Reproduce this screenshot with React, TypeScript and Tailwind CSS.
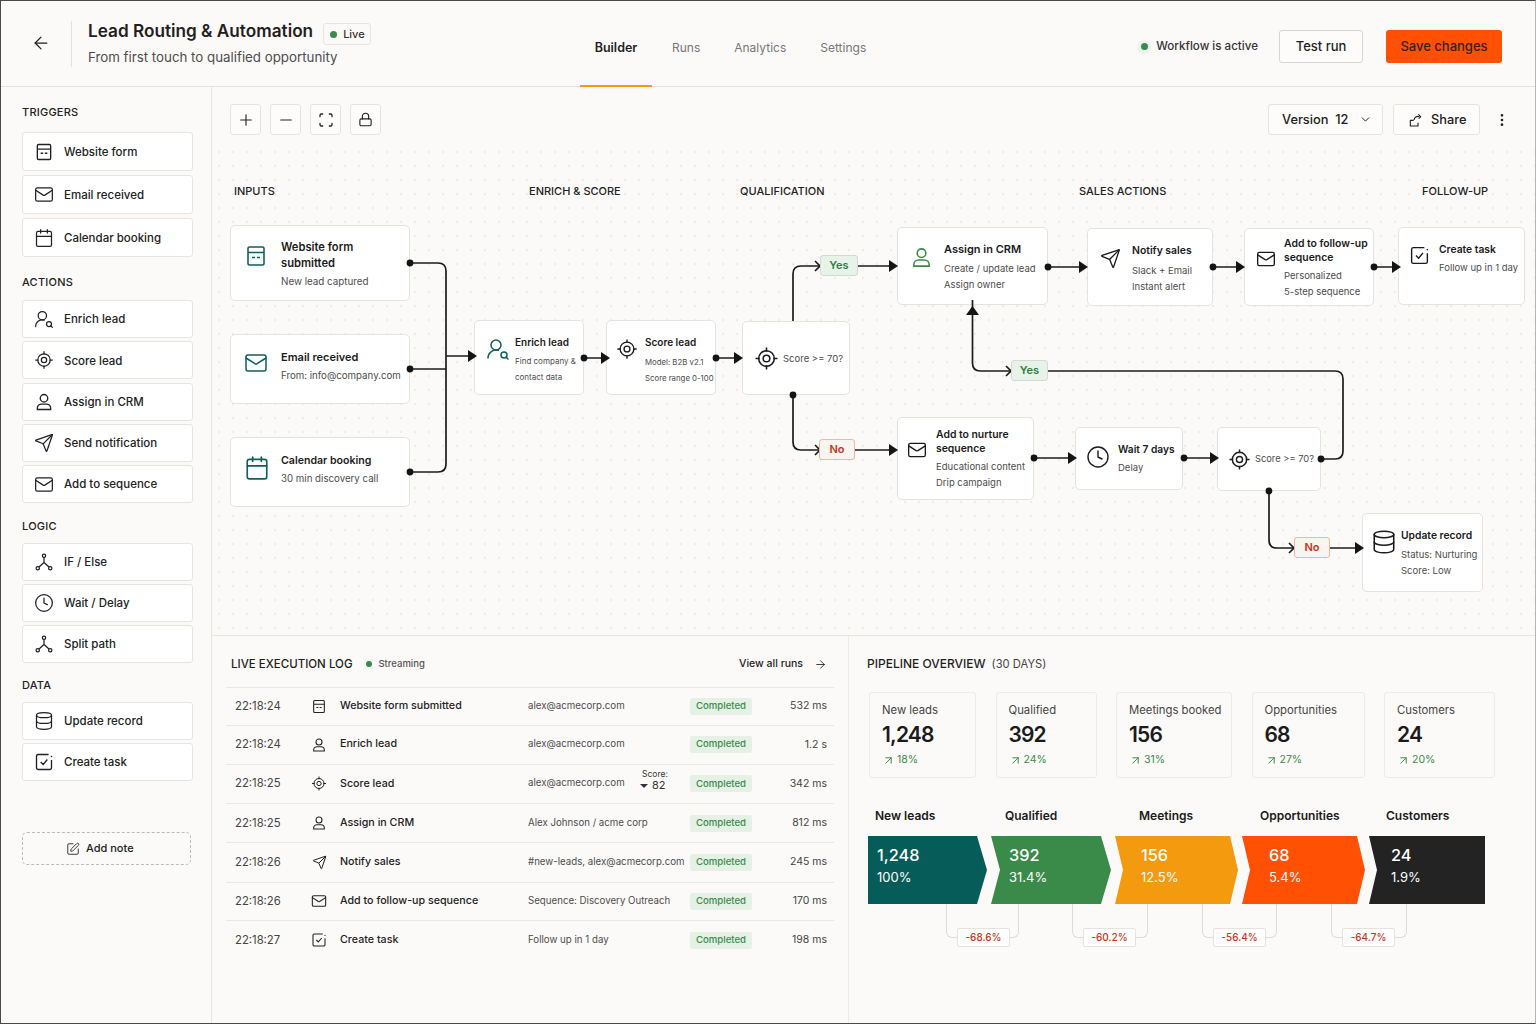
import type { ReactNode } from "react";
import {
  ArrowLeft,
  ArrowRight,
  ArrowUpRight,
  Calendar,
  ChevronDown,
  Clock,
  Database,
  EllipsisVertical,
  Lock,
  Mail,
  Minus,
  Plus,
  Scan,
  Send,
  SquarePen,
  UserRoundSearch,
} from "lucide-react";

type IconProps = { className?: string };

function FormIcon({ className }: IconProps) {
  return (
    <svg viewBox="0 0 24 24" fill="none" stroke="currentColor" strokeWidth="1.6" className={className}>
      <rect x="4" y="3" width="16" height="18" rx="1.5" />
      <path d="M4 8.5h16M8 13.5h3M13 13.5h3" />
    </svg>
  );
}

function TargetIcon({ className }: IconProps) {
  return (
    <svg viewBox="0 0 24 24" fill="none" stroke="currentColor" strokeWidth="1.5" className={className}>
      <circle cx="12" cy="12" r="7.5" />
      <circle cx="12" cy="12" r="3.2" />
      <path d="M12 1.5v4M12 18.5v4M1.5 12h4M18.5 12h4" />
    </svg>
  );
}

function BranchIcon({ className }: IconProps) {
  return (
    <svg viewBox="0 0 24 24" fill="none" stroke="currentColor" strokeWidth="1.5" className={className}>
      <circle cx="12" cy="4.5" r="2" />
      <circle cx="4.5" cy="19.5" r="2" />
      <circle cx="19.5" cy="19.5" r="2" />
      <path d="M12 6.5v6L6 18M12 12.5l6 5.5" />
    </svg>
  );
}

function TaskIcon({ className }: IconProps) {
  return (
    <svg viewBox="0 0 24 24" fill="none" stroke="currentColor" strokeWidth="1.6" className={className}>
      <path d="M17.5 3H5a2 2 0 0 0-2 2v14a2 2 0 0 0 2 2h14a2 2 0 0 0 2-2V9.5" />
      <path d="M21 4.5v1.6" />
      <path d="M8 12l3 3 5-6" />
    </svg>
  );
}

function PersonIcon({ className }: IconProps) {
  return (
    <svg viewBox="0 0 24 24" fill="none" stroke="currentColor" strokeWidth="1.6" className={className}>
      <circle cx="12" cy="7.5" r="4.5" />
      <path d="M4 21v-1.5a5 5 0 0 1 5-5h6a5 5 0 0 1 5 5V21z" />
    </svg>
  );
}

function ShareIcon({ className }: IconProps) {
  return (
    <svg viewBox="0 0 24 24" fill="none" stroke="currentColor" strokeWidth="1.7" className={className}>
      <path d="M3.5 12.5h5M3.5 12.5V21h11.5v-5" />
      <path d="M9 12a6 6 0 0 1 8-5" />
      <path d="M15.5 3.5l3.5 3.5-3 3" />
    </svg>
  );
}

function Head({ x, y }: { x: number; y: number }) {
  return <polygon points={`${x - 9},${y - 6} ${x},${y} ${x - 9},${y + 6}`} fill="#141414" stroke="none" />;
}

function Open({ x, y }: { x: number; y: number }) {
  return <path d={`M${x - 5} ${y - 5} L${x} ${y} L${x - 5} ${y + 5}`} fill="none" />;
}

function Dot({ x, y }: { x: number; y: number }) {
  return <circle cx={x} cy={y} r="3.4" fill="#141414" stroke="none" />;
}

function Connectors() {
  return (
    <svg
      viewBox="212 145 1323 490"
      fill="none"
      stroke="#1c1c1c"
      strokeWidth="1.7"
      className="absolute left-0 top-0 h-full w-full"
    >
      <path d="M410 263H438Q446 263 446 271V464Q446 472 438 472H410" />
      <path d="M410 369H446M446 356H470" />
      <path d="M584 358H603M716 358H737" />
      <path d="M793 321V274Q793 266 801 266H819M858 266H892" />
      <path d="M793 395V442Q793 450 801 450H819M855 450H892" />
      <path d="M972.5 300V363Q972.5 371 980.5 371H1011" />
      <path d="M1048 371H1335Q1343 371 1343 379V451Q1343 459 1335 459H1321" />
      <path d="M1048 267H1082M1213 267H1239M1374 267H1394" />
      <path d="M1034 458H1071M1184 458H1212" />
      <path d="M1269 491V540Q1269 548 1277 548H1294M1330 548H1358" />
      <Dot x={410} y={263} />
      <Dot x={410} y={369} />
      <Dot x={410} y={472} />
      <Dot x={584} y={358} />
      <Dot x={716} y={358} />
      <Dot x={793} y={395} />
      <Dot x={1048} y={267} />
      <Dot x={1213} y={267} />
      <Dot x={1374} y={267} />
      <Dot x={1034} y={458} />
      <Dot x={1184} y={458} />
      <Dot x={1321} y={459} />
      <Dot x={1269} y={491} />
      <Head x={477} y={356} />
      <Head x={610} y={358} />
      <Head x={743} y={358} />
      <Head x={898} y={266} />
      <Head x={898} y={450} />
      <Head x={1088} y={267} />
      <Head x={1245} y={267} />
      <Head x={1401} y={267} />
      <Head x={1077} y={458} />
      <Head x={1219} y={458} />
      <Head x={1364} y={548} />
      <polygon points="966,315 972.5,306 979,315" fill="#141414" stroke="none" />
      <Open x={820} y={266} />
      <Open x={820} y={450} />
      <Open x={1011} y={371} />
      <Open x={1294} y={548} />
    </svg>
  );
}

type NodeProps = {
  className: string;
  icon: ReactNode;
  textClass: string;
  title?: string[];
  lines?: string[];
  titleClass?: string;
  subClass?: string;
};

function Node({
  className,
  icon,
  textClass,
  title = [],
  lines = [],
  titleClass = "text-[11px] leading-[15px]",
  subClass = "mt-[3px] text-[10px]",
}: NodeProps) {
  return (
    <div className={`absolute rounded-[5px] border border-[#e6e3de] bg-white ${className}`}>
      {icon}
      <div className={`absolute ${textClass}`}>
        <div className={`font-semibold text-[#1b1b1b] whitespace-nowrap ${titleClass}`}>
          {title.map((t) => (
            <div key={t}>{t}</div>
          ))}
        </div>
        <div className={`leading-[16px] text-[#4d4d4d] whitespace-nowrap ${subClass}`}>
          {lines.map((l) => (
            <div key={l}>{l}</div>
          ))}
        </div>
      </div>
    </div>
  );
}

function Pill({ className, children }: { className: string; children: ReactNode }) {
  return (
    <div className={`absolute flex h-[21px] items-center justify-center rounded-[3px] border text-[11px] font-semibold ${className}`}>
      {children}
    </div>
  );
}

function SideItem({ icon, label, tall }: { icon: ReactNode; label: string; tall?: boolean }) {
  return (
    <div
      className={`flex items-center gap-[10px] rounded-[3px] border border-[#e8e5e0] bg-white pl-[11px] text-[11.5px] font-medium text-[#222] ${tall ? "h-[39px]" : "h-[38px]"}`}
    >
      <span className="flex w-[20px] justify-center text-[#222]">{icon}</span>
      <span className="pt-[2px]">{label}</span>
    </div>
  );
}

function SideLabel({ children, className }: { children: ReactNode; className: string }) {
  return <div className={`text-[11px] font-medium leading-[16px] tracking-[0.02em] text-[#222] ${className}`}>{children}</div>;
}

function Sidebar() {
  const ic = "h-[20px] w-[20px]";
  return (
    <aside className="w-[211px] shrink-0 border-r border-[#e8e5e0] pl-[21px] pr-[18px] pt-[17px]">
      <SideLabel className="mb-[12px]">TRIGGERS</SideLabel>
      <div className="flex flex-col gap-[4px]">
        <SideItem tall icon={<FormIcon className={ic} />} label="Website form" />
        <SideItem tall icon={<Mail strokeWidth={1.5} className="h-[21px] w-[21px]" />} label="Email received" />
        <SideItem tall icon={<Calendar strokeWidth={1.5} className={ic} />} label="Calendar booking" />
      </div>
      <SideLabel className="mb-[10px] mt-[17px]">ACTIONS</SideLabel>
      <div className="flex flex-col gap-[3.25px]">
        <SideItem icon={<UserRoundSearch strokeWidth={1.5} className={ic} />} label="Enrich lead" />
        <SideItem icon={<TargetIcon className={ic} />} label="Score lead" />
        <SideItem icon={<PersonIcon className={ic} />} label="Assign in CRM" />
        <SideItem icon={<Send strokeWidth={1.5} className={ic} />} label="Send notification" />
        <SideItem icon={<Mail strokeWidth={1.5} className="h-[21px] w-[21px]" />} label="Add to sequence" />
      </div>
      <SideLabel className="mb-[9px] mt-[15px]">LOGIC</SideLabel>
      <div className="flex flex-col gap-[3px]">
        <SideItem icon={<BranchIcon className={ic} />} label="IF / Else" />
        <SideItem icon={<Clock strokeWidth={1.5} className={ic} />} label="Wait / Delay" />
        <SideItem icon={<BranchIcon className={ic} />} label="Split path" />
      </div>
      <SideLabel className="mb-[9px] mt-[14px]">DATA</SideLabel>
      <div className="flex flex-col gap-[3px]">
        <SideItem icon={<Database strokeWidth={1.5} className={ic} />} label="Update record" />
        <SideItem icon={<TaskIcon className={ic} />} label="Create task" />
      </div>
      <div className="mt-[51px] flex h-[33px] w-[169px] items-center gap-[6px] rounded-[5px] border border-dashed border-[#bdbab5] pl-[43px] text-[11px] font-medium text-[#222]">
        <SquarePen strokeWidth={1.5} className="h-[14px] w-[14px]" />
        Add note
      </div>
    </aside>
  );
}

function ToolButton({ children }: { children: ReactNode }) {
  return (
    <div className="flex h-[31px] w-[31px] items-center justify-center rounded-[3px] border border-[#e6e3de] bg-[#fdfcfa] text-[#222]">
      {children}
    </div>
  );
}

function Canvas() {
  const section = "absolute top-[39px] text-[11px] font-medium leading-[14px] text-[#222]";
  const big = "h-[24px] w-[24px]";
  return (
    <div className="flex h-[549px] flex-col border-b border-[#e8e5e0]">
      <div className="flex h-[58px] shrink-0 items-start justify-between pl-[18px] pr-[25px] pt-[17px]">
        <div className="flex gap-[9px]">
          <ToolButton>
            <Plus strokeWidth={1.5} className="h-[18px] w-[18px]" />
          </ToolButton>
          <ToolButton>
            <Minus strokeWidth={1.5} className="h-[18px] w-[18px]" />
          </ToolButton>
          <ToolButton>
            <Scan strokeWidth={1.9} className="h-[16px] w-[16px]" />
          </ToolButton>
          <ToolButton>
            <Lock strokeWidth={1.8} className="h-[15px] w-[15px]" />
          </ToolButton>
        </div>
        <div className="flex items-center text-[12.8px] font-medium text-[#222]">
          <div className="flex h-[31px] w-[115px] items-center rounded-[3px] border border-[#e6e3de] bg-[#fdfcfa] pl-[13px]">
            Version&nbsp; 12
            <ChevronDown strokeWidth={1.8} className="ml-[11px] h-[13px] w-[13px]" />
          </div>
          <div className="ml-[10px] flex h-[31px] w-[87px] items-center gap-[7px] rounded-[3px] border border-[#e6e3de] bg-[#fdfcfa] pl-[14px]">
            <ShareIcon className="h-[16px] w-[16px]" />
            Share
          </div>
          <EllipsisVertical strokeWidth={2} className="ml-[14px] h-[16px] w-[16px]" />
        </div>
      </div>

      <div className="relative flex-1 overflow-hidden bg-[radial-gradient(#eeebe6_0.8px,transparent_0.9px)] bg-[size:14px_14px]">
        <div className={`${section} left-[22px]`}>INPUTS</div>
        <div className={`${section} left-[317px]`}>ENRICH &amp; SCORE</div>
        <div className={`${section} left-[528px]`}>QUALIFICATION</div>
        <div className={`${section} left-[867px]`}>SALES ACTIONS</div>
        <div className={`${section} left-[1210px]`}>FOLLOW-UP</div>

        <Node
          className="left-[18px] top-[80px] h-[76px] w-[180px]"
          icon={<FormIcon className={`absolute left-[13px] top-[18px] text-[#0f5f5c] ${big}`} />}
          textClass="left-[50px] top-[13px]"
          title={["Website form", "submitted"]}
          lines={["New lead captured"]}
          titleClass="text-[11.2px] leading-[16px]"
          subClass="mt-[3px] text-[9.8px]"
        />
        <Node
          className="left-[18px] top-[189px] h-[70px] w-[180px]"
          icon={<Mail strokeWidth={1.5} className="absolute left-[13px] top-[16px] h-[24px] w-[24px] text-[#0f5f5c]" />}
          textClass="left-[50px] top-[14px]"
          title={["Email received"]}
          lines={["From: info@company.com"]}
          titleClass="text-[11px] leading-[16px]"
          subClass="mt-[3px] text-[9.7px]"
        />
        <Node
          className="left-[18px] top-[292px] h-[70px] w-[180px]"
          icon={<Calendar strokeWidth={1.5} className="absolute left-[13px] top-[17px] h-[26px] w-[26px] text-[#0f5f5c]" />}
          textClass="left-[50px] top-[15px]"
          title={["Calendar booking"]}
          lines={["30 min discovery call"]}
          titleClass="text-[10.6px] leading-[16px]"
          subClass="mt-[2px] text-[9.7px]"
        />
        <Node
          className="left-[262px] top-[175px] h-[75px] w-[110px]"
          icon={<UserRoundSearch strokeWidth={1.5} className={`absolute left-[11px] top-[16px] text-[#0f5f5c] ${big}`} />}
          textClass="left-[40px] top-[14px]"
          title={["Enrich lead"]}
          lines={["Find company &", "contact data"]}
          titleClass="text-[10px] leading-[15px]"
          subClass="mt-[3px] text-[8px]"
        />
        <Node
          className="left-[394px] top-[175px] h-[75px] w-[110px]"
          icon={<TargetIcon className="absolute left-[9px] top-[17px] h-[22px] w-[22px] text-[#1b1b1b]" />}
          textClass="left-[38px] top-[14px]"
          title={["Score lead"]}
          lines={["Model: B2B v2.1", "Score range 0-100"]}
          titleClass="text-[10px] leading-[15px]"
          subClass="mt-[4px] text-[7.8px]"
        />
        <Node
          className="left-[530px] top-[176px] h-[74px] w-[108px]"
          icon={<TargetIcon className="absolute left-[11px] top-[24px] h-[25px] w-[25px] text-[#1b1b1b]" />}
          textClass="left-[40px] top-[29px]"
          lines={["Score >= 70?"]}
          subClass="text-[9.5px] text-[#2a2a2a]"
        />
        <Node
          className="left-[685px] top-[82px] h-[78px] w-[151px]"
          icon={<PersonIcon className="absolute left-[12px] top-[18px] h-[23px] w-[23px] text-[#3a8a4a]" />}
          textClass="left-[46px] top-[14px]"
          title={["Assign in CRM"]}
          lines={["Create / update lead", "Assign owner"]}
          subClass="mt-[4px] text-[9.5px]"
        />
        <Node
          className="left-[875px] top-[83px] h-[78px] w-[126px]"
          icon={<Send strokeWidth={1.5} className="absolute left-[12px] top-[19px] h-[21px] w-[21px] text-[#1b1b1b]" />}
          textClass="left-[44px] top-[14px]"
          title={["Notify sales"]}
          lines={["Slack + Email", "Instant alert"]}
          titleClass="text-[10.4px] leading-[15px]"
          subClass="mt-[5px] text-[9.5px]"
        />
        <Node
          className="left-[1032px] top-[83px] h-[78px] w-[130px]"
          icon={<Mail strokeWidth={1.6} className="absolute left-[11px] top-[20px] h-[20px] w-[20px] text-[#1b1b1b]" />}
          textClass="left-[39px] top-[8px]"
          title={["Add to follow-up", "sequence"]}
          lines={["Personalized", "5-step sequence"]}
          titleClass="text-[10.4px] leading-[14px]"
          subClass="mt-[3px] text-[9.5px]"
        />
        <Node
          className="left-[1186px] top-[82px] h-[78px] w-[127px]"
          icon={<TaskIcon className="absolute left-[10px] top-[17px] h-[21px] w-[21px] text-[#1b1b1b]" />}
          textClass="left-[40px] top-[14px]"
          title={["Create task"]}
          lines={["Follow up in 1 day"]}
          titleClass="text-[10.3px] leading-[15px]"
          subClass="mt-[3px] text-[9.5px]"
        />
        <Node
          className="left-[685px] top-[272px] h-[83px] w-[137px]"
          icon={<Mail strokeWidth={1.6} className="absolute left-[9px] top-[22px] h-[20px] w-[20px] text-[#1b1b1b]" />}
          textClass="left-[38px] top-[10px]"
          title={["Add to nurture", "sequence"]}
          lines={["Educational content", "Drip campaign"]}
          titleClass="text-[10.4px] leading-[14px]"
          subClass="mt-[3px] text-[9.5px]"
        />
        <Node
          className="left-[863px] top-[282px] h-[63px] w-[108px]"
          icon={<Clock strokeWidth={1.4} className="absolute left-[10px] top-[17px] h-[24px] w-[24px] text-[#1b1b1b]" />}
          textClass="left-[42px] top-[14px]"
          title={["Wait 7 days"]}
          lines={["Delay"]}
          titleClass="text-[10.2px] leading-[15px]"
          subClass="mt-[3px] text-[9.5px]"
        />
        <Node
          className="left-[1005px] top-[282px] h-[64px] w-[104px]"
          icon={<TargetIcon className="absolute left-[10px] top-[20px] h-[23px] w-[23px] text-[#1b1b1b]" />}
          textClass="left-[37px] top-[23px]"
          lines={["Score >= 70?"]}
          subClass="text-[9.3px] text-[#2a2a2a]"
        />
        <Node
          className="left-[1150px] top-[368px] h-[79px] w-[121px]"
          icon={<Database strokeWidth={1.4} className="absolute left-[8px] top-[15px] h-[26px] w-[26px] text-[#1b1b1b]" />}
          textClass="left-[38px] top-[14px]"
          title={["Update record"]}
          lines={["Status: Nurturing", "Score: Low"]}
          titleClass="text-[10.3px] leading-[15px]"
          subClass="mt-[4px] text-[9.5px]"
        />

        <Connectors />

        <Pill className="left-[608px] top-[110px] w-[38px] border-[#cfdccf] bg-[#e8f2e8] text-[#2f7d42]">Yes</Pill>
        <Pill className="left-[607px] top-[294px] w-[36px] border-[#f3b79a] bg-[#f8f4f1] text-[#c9361b]">No</Pill>
        <Pill className="left-[799px] top-[215px] w-[37px] border-[#cfdccf] bg-[#e8f2e8] text-[#2f7d42]">Yes</Pill>
        <Pill className="left-[1082px] top-[392px] w-[36px] border-[#f3b79a] bg-[#f8f4f1] text-[#c9361b]">No</Pill>
      </div>
    </div>
  );
}

const logRows = [
  { time: "22:18:24", icon: <FormIcon className="h-[17px] w-[17px]" />, name: "Website form submitted", detail: "alex@acmecorp.com", ms: "532 ms", h: "h-[37.5px]" },
  { time: "22:18:24", icon: <PersonIcon className="h-[16px] w-[16px]" />, name: "Enrich lead", detail: "alex@acmecorp.com", ms: "1.2 s", h: "h-[39px]" },
  { time: "22:18:25", icon: <TargetIcon className="h-[17px] w-[17px]" />, name: "Score lead", detail: "alex@acmecorp.com", score: true, ms: "342 ms", h: "h-[39.5px]" },
  { time: "22:18:25", icon: <PersonIcon className="h-[16px] w-[16px]" />, name: "Assign in CRM", detail: "Alex Johnson / acme corp", ms: "812 ms", h: "h-[39px]" },
  { time: "22:18:26", icon: <Send strokeWidth={1.6} className="h-[15px] w-[15px]" />, name: "Notify sales", detail: "#new-leads, alex@acmecorp.com", ms: "245 ms", h: "h-[39.5px]" },
  { time: "22:18:26", icon: <Mail strokeWidth={1.6} className="h-[16px] w-[16px]" />, name: "Add to follow-up sequence", detail: "Sequence: Discovery Outreach", ms: "170 ms", h: "h-[38.5px]" },
  { time: "22:18:27", icon: <TaskIcon className="h-[16px] w-[16px]" />, name: "Create task", detail: "Follow up in 1 day", ms: "198 ms", h: "h-[39px]" },
];

function ExecutionLog() {
  return (
    <section className="w-[637px] shrink-0 border-r border-[#eeebe6]">
      <div className="flex h-[51px] items-center pl-[19px] pr-[21px] pt-[5px] leading-[16px]">
        <span className="text-[11.5px] font-medium text-[#1f1f1f]">LIVE EXECUTION LOG</span>
        <span className="ml-[14px] h-[6px] w-[6px] rounded-full bg-[#3a8a4a]" />
        <span className="ml-[6px] text-[9.5px] font-medium text-[#555]">Streaming</span>
        <span className="ml-auto text-[10.5px] font-medium text-[#222]">View all runs</span>
        <ArrowRight strokeWidth={1.6} className="ml-[11px] h-[13px] w-[13px] text-[#222]" />
      </div>
      <div className="mx-[14px]">
        {logRows.map((r) => (
          <div key={r.name} className={`flex items-center border-t border-[#ebe8e3] pl-[9px] pr-[7px] ${r.h}`}>
            <span className="w-[76px] shrink-0 text-[11.3px] text-[#444]">{r.time}</span>
            <span className="flex w-[16px] shrink-0 justify-center text-[#222]">{r.icon}</span>
            <span className="ml-[13px] w-[188px] shrink-0 text-[10.7px] font-medium text-[#222]">{r.name}</span>
            <span className="relative w-[162px] shrink-0 whitespace-nowrap text-[9.7px] text-[#4d4d4d]">
              {r.detail}
              {r.score && (
                <span className="absolute left-[112px] top-[-7px] leading-[11px] text-[#333]">
                  <span className="block pl-[2px] text-[8.5px]">Score:</span>
                  <span className="flex items-center gap-[4px] text-[11px]">
                    <span className="h-0 w-0 border-x-[4px] border-t-[4px] border-x-transparent border-t-[#333]" />
                    82
                  </span>
                </span>
              )}
            </span>
            <span className="flex h-[17px] w-[62px] shrink-0 items-center justify-center rounded-[2px] bg-[#e5f1e5] text-[9.6px] font-medium text-[#3a8a4a]">
              Completed
            </span>
            <span className="flex-1 text-right text-[10.5px] text-[#444]">{r.ms}</span>
          </div>
        ))}
      </div>
    </section>
  );
}

const stats = [
  { label: "New leads", value: "1,248", delta: "18%", w: "w-[107px]" },
  { label: "Qualified", value: "392", delta: "24%", w: "w-[101px]" },
  { label: "Meetings booked", value: "156", delta: "31%", w: "w-[116px]" },
  { label: "Opportunities", value: "68", delta: "27%", w: "w-[113px]" },
  { label: "Customers", value: "24", delta: "20%", w: "w-[111px]" },
];

const funnel = [
  { value: "1,248", pct: "100%", cls: "w-[119px] bg-[#065c59] pl-[9px] [clip-path:polygon(0_0,calc(100%_-_10px)_0,100%_50%,calc(100%_-_10px)_100%,0_100%)]" },
  { value: "392", pct: "31.4%", cls: "w-[120px] bg-[#3a8a4a] pl-[18px] [clip-path:polygon(0_0,calc(100%_-_10px)_0,100%_50%,calc(100%_-_10px)_100%,0_100%,9px_50%)]" },
  { value: "156", pct: "12.5%", cls: "w-[123px] bg-[#f39a0e] pl-[26px] [clip-path:polygon(0_0,calc(100%_-_8px)_0,100%_50%,calc(100%_-_8px)_100%,0_100%,8px_50%)]" },
  { value: "68", pct: "5.4%", cls: "w-[123px] bg-[#ff5003] pl-[27px] [clip-path:polygon(0_0,calc(100%_-_8px)_0,100%_50%,calc(100%_-_8px)_100%,0_100%,8px_50%)]" },
  { value: "24", pct: "1.9%", cls: "w-[116px] bg-[#232323] pl-[22px] [clip-path:polygon(0_0,100%_0,100%_100%,0_100%,8px_50%)]" },
];

function Pipeline() {
  return (
    <section className="flex-1 pl-[18px]">
      <div className="flex h-[51px] items-center pt-[5px] leading-[16px] text-[#1f1f1f]">
        <span className="text-[12px] font-medium">PIPELINE OVERVIEW</span>
        <span className="ml-[6px] text-[11.2px] text-[#444]">(30 DAYS)</span>
      </div>
      <div className="ml-[2px] mt-[5px] flex gap-[19.5px]">
        {stats.map((s) => (
          <div key={s.label} className={`h-[86px] rounded-[3px] border border-[#eeebe6] pl-[12px] pt-[10px] ${s.w}`}>
            <div className="text-[11.3px] leading-[14px] text-[#444]">{s.label}</div>
            <div className="mt-[4px] text-[21px] font-semibold leading-[28px] tracking-[-0.04em] text-[#1b1b1b]">{s.value}</div>
            <div className="mt-[4px] flex items-center gap-[2px] text-[10.5px] leading-[14px] text-[#3a8a4a]">
              <ArrowUpRight strokeWidth={1.8} className="h-[13px] w-[13px]" />
              {s.delta}
            </div>
          </div>
        ))}
      </div>
      <div className="relative mt-[30px] h-[16px] text-[12px] font-semibold leading-[16px] text-[#1b1b1b]">
        <span className="absolute left-[8px]">New leads</span>
        <span className="absolute left-[138px]">Qualified</span>
        <span className="absolute left-[272px]">Meetings</span>
        <span className="absolute left-[393px]">Opportunities</span>
        <span className="absolute left-[519px]">Customers</span>
      </div>
      <div className="ml-[1px] mt-[12px] flex gap-[4px]">
        {funnel.map((f) => (
          <div key={f.value} className={`flex h-[68px] flex-col justify-center pb-[10px] text-white ${f.cls}`}>
            <div className="text-[16.3px] font-medium leading-[22px]">{f.value}</div>
            <div className="mt-[2px] text-[13px] leading-[18px]">{f.pct}</div>
          </div>
        ))}
      </div>
      <div className="ml-[79px] flex items-start">
        <Drop w="w-[73px]" label="-68.6%" />
        <Drop w="ml-[53px] w-[76px]" label="-60.2%" />
        <Drop w="ml-[54px] w-[75px]" label="-56.4%" />
        <Drop w="ml-[54px] w-[76px]" label="-64.7%" />
      </div>
    </section>
  );
}

function Drop({ w, label }: { w: string; label: string }) {
  return (
    <div className={`relative h-[34px] rounded-b-[6px] border-x border-b border-[#dedbd6] ${w}`}>
      <span className="absolute left-[10px] top-[24px] flex h-[19px] w-[53px] items-center justify-center rounded-[2px] border border-[#e6e3de] bg-white text-[10px] font-medium text-[#c9361b]">
        {label}
      </span>
    </div>
  );
}

export default function App() {
  return (
    <div className="flex h-[1024px] w-[1536px] flex-col overflow-hidden border border-[#4a4a4a] border-r-[#b5b5b5] bg-[#fcfaf8] font-[Inter,sans-serif] text-[#1f1f1f]">
      <header className="flex h-[86px] shrink-0 items-center border-b border-[#e5e2dd]">
        <div className="flex w-[70px] justify-center pb-[2px] pl-[10px]">
          <ArrowLeft strokeWidth={1.5} className="h-[20px] w-[20px]" />
        </div>
        <div className="h-[46px] w-px bg-[#e5e2dd]" />
        <div className="ml-[16px] w-[492px] pb-[2px]">
          <div className="flex h-[24px] items-start">
            <span className="text-[17.2px] font-semibold leading-[24px]">Lead Routing &amp; Automation</span>
            <span className="ml-[10px] mt-[4px] flex h-[22px] w-[48px] items-center gap-[6px] rounded-[3px] border border-[#e8e5e0] pl-[6px] text-[11px] font-medium text-[#333]">
              <span className="h-[7px] w-[7px] rounded-full bg-[#3a8a4a]" />
              Live
            </span>
          </div>
          <div className="mt-[5px] text-[13.3px] leading-[18px] text-[#4d4d4d]">From first touch to qualified opportunity</div>
        </div>
        <nav className="flex h-full items-center text-[12px] text-[#777]">
          <div className="relative flex h-full w-[72px] items-center justify-center pt-[9px] text-[12.5px] font-semibold text-[#1f1f1f]">
            Builder
            <span className="absolute inset-x-0 bottom-[-1px] h-[2px] bg-[#f39a0e]" />
          </div>
          <span className="ml-[20px] mt-[9px]">Runs</span>
          <span className="ml-[34px] mt-[9px]">Analytics</span>
          <span className="ml-[34px] mt-[9px]">Settings</span>
        </nav>
        <div className="ml-auto mt-[6px] flex items-center pr-[33px]">
          <span className="flex h-[14px] w-[14px] items-center justify-center rounded-full bg-[#edf3ed]">
            <span className="h-[7px] w-[7px] rounded-full bg-[#3a8a4a]" />
          </span>
          <span className="ml-[5px] text-[11.6px] font-medium text-[#333]">Workflow is active</span>
          <div className="ml-[21px] flex h-[33px] w-[84px] items-center justify-center rounded-[3px] border border-[#d8d5d0] bg-[#fdfcfa] text-[13px] font-medium">
            Test run
          </div>
          <div className="ml-[23px] flex h-[33px] w-[116px] items-center justify-center rounded-[3px] bg-[#ff5003] text-[13px] font-medium text-[#33221e]">
            Save changes
          </div>
        </div>
      </header>
      <div className="flex min-h-0 flex-1">
        <Sidebar />
        <main className="flex min-w-0 flex-1 flex-col">
          <Canvas />
          <div className="flex min-h-0 flex-1">
            <ExecutionLog />
            <Pipeline />
          </div>
        </main>
      </div>
    </div>
  );
}
